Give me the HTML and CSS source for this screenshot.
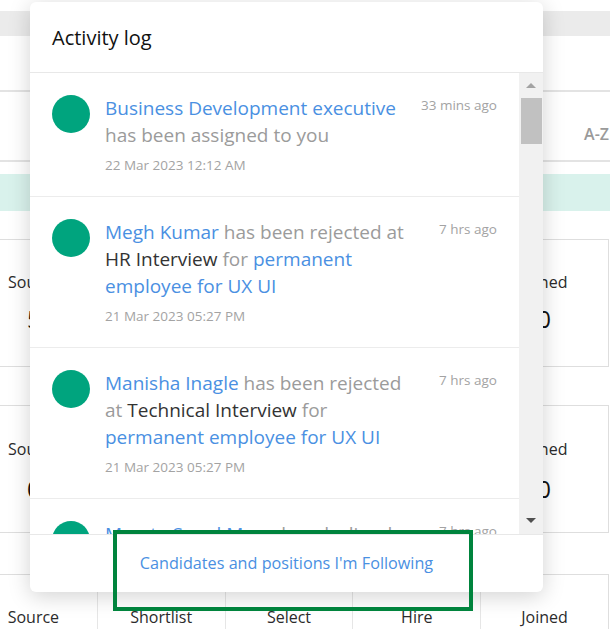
FILE: index.html
```html
<!DOCTYPE html>
<html lang="en">

<head>
    <meta charset="UTF-8">
    <meta name="viewport" content="width=device-width, initial-scale=1.0">
    <title>Activity log</title>
    <link rel="stylesheet" href="styles.css">
</head>

<body>

    <div class="page">
        <div class="top-strip"></div>
        <div class="toolbar"></div>
        <div class="sort-bar"><span class="sort">A-Z</span></div>
        <div class="notice"></div>

        <div class="stats stats-first">
            <div class="stat"><div class="stat-label">Source</div><div class="stat-value">5</div></div>
            <div class="stat"><div class="stat-label">Shortlist</div><div class="stat-value">2</div></div>
            <div class="stat"><div class="stat-label">Select</div><div class="stat-value">1</div></div>
            <div class="stat"><div class="stat-label">Hire</div><div class="stat-value">0</div></div>
            <div class="stat"><div class="stat-label">Joined</div><div class="stat-value">0</div></div>
        </div>

        <div class="stats stats-second">
            <div class="stat"><div class="stat-label">Source</div><div class="stat-value">0</div></div>
            <div class="stat"><div class="stat-label">Shortlist</div><div class="stat-value">0</div></div>
            <div class="stat"><div class="stat-label">Select</div><div class="stat-value">0</div></div>
            <div class="stat"><div class="stat-label">Hire</div><div class="stat-value">0</div></div>
            <div class="stat"><div class="stat-label">Joined</div><div class="stat-value">0</div></div>
        </div>

        <div class="stats stats-last">
            <div class="stat"><div class="stat-label">Source</div></div>
            <div class="stat"><div class="stat-label">Shortlist</div></div>
            <div class="stat"><div class="stat-label">Select</div></div>
            <div class="stat"><div class="stat-label">Hire</div></div>
            <div class="stat"><div class="stat-label">Joined</div></div>
        </div>
    </div>

    <div class="popup">
        <div class="popup-head">Activity log</div>

        <div class="log">
            <div class="log-items">

                <div class="entry">
                    <div class="avatar"></div>
                    <div class="entry-body">
                        <div class="entry-text"><span class="link">Business Development executive</span> has been assigned to you</div>
                        <div class="entry-date">22 Mar 2023 12:12 AM</div>
                    </div>
                    <div class="entry-time">33 mins ago</div>
                </div>

                <div class="entry">
                    <div class="avatar"></div>
                    <div class="entry-body">
                        <div class="entry-text"><span class="link">Megh Kumar</span> has been rejected at <span class="stage">HR Interview</span> for <span class="link">permanent employee for UX UI</span></div>
                        <div class="entry-date">21 Mar 2023 05:27 PM</div>
                    </div>
                    <div class="entry-time">7 hrs ago</div>
                </div>

                <div class="entry">
                    <div class="avatar"></div>
                    <div class="entry-body">
                        <div class="entry-text"><span class="link">Manisha Inagle</span> has been rejected at <span class="stage">Technical Interview</span> for <span class="link">permanent employee for UX UI</span></div>
                        <div class="entry-date">21 Mar 2023 05:27 PM</div>
                    </div>
                    <div class="entry-time">7 hrs ago</div>
                </div>

                <div class="entry">
                    <div class="avatar"></div>
                    <div class="entry-body">
                        <div class="entry-text"><span class="link">Mamta Sonal Mane</span> has declined the offer for <span class="link">permanent employee for UX UI</span></div>
                        <div class="entry-date">21 Mar 2023 05:27 PM</div>
                    </div>
                    <div class="entry-time">7 hrs ago</div>
                </div>

            </div>

            <div class="scrollbar">
                <div class="scroll-btn"><span class="arrow-up"></span></div>
                <div class="scroll-thumb"></div>
                <div class="scroll-track"></div>
                <div class="scroll-btn"><span class="arrow-down"></span></div>
            </div>
        </div>

        <div class="popup-foot">
            <a class="follow" href="#">Candidates and positions I'm Following</a>
        </div>
    </div>

    <div class="highlight"></div>

</body>

</html>
```

FILE: styles.css
```css
body {
    margin: 0;
    width: 610px;
    height: 629px;
    overflow: hidden;
    position: relative;
    font-family: "Open Sans", "Noto Sans", sans-serif;
    background-color: white;
}

.page {
    width: 610px;
    height: 629px;
    overflow: hidden;
}

.top-strip {
    margin-top: 11px;
    height: 25px;
    background-color: #ebebeb;
}

.toolbar {
    height: 54px;
    border-bottom: 2px solid #e3e3e3;
}

.sort-bar {
    height: 70px;
    padding-top: 30px;
    box-sizing: border-box;
    border-bottom: 2px solid #e3e3e3;
    display: flex;
    justify-content: flex-end;
}

.sort {
    font-size: 16px;
    line-height: 24px;
    font-weight: 600;
    color: #9a9a9a;
    margin-right: 1px;
}

.notice {
    margin-top: 12px;
    height: 37px;
    background-color: #d9f2ec;
}

.stats {
    display: flex;
    margin-left: -31px;
    width: 640px;
    height: 128px;
    box-sizing: border-box;
    border: 1px solid #dedede;
    margin-top: 38px;
}

.stats-first {
    margin-top: 28px;
}

.stats-last {
    margin-top: 41px;
}

.stat {
    width: 128px;
    padding-top: 30px;
    text-align: center;
}

.stats-second .stat {
    padding-top: 31px;
}

.stats-second .stat-value {
    margin-top: 12px;
}

.stats-last .stat {
    padding-top: 30px;
    border-left: 1px solid #e6e6e6;
}

.stats-last .stat:first-child {
    border-left: none;
}

.stat-label {
    font-size: 16px;
    line-height: 24px;
    color: #2b2b2b;
}

.stat-value {
    margin-top: 9px;
    font-size: 24px;
    line-height: 32px;
    color: #111;
}

/* popup */
.popup {
    position: absolute;
    left: 30px;
    top: 2px;
    width: 513px;
    height: 590px;
    background-color: white;
    border-radius: 6px;
    box-shadow: 0 4px 22px rgba(0, 0, 0, 0.18);
    display: flex;
    flex-direction: column;
    overflow: hidden;
}

.popup-head {
    height: 70px;
    flex-shrink: 0;
    padding: 0 22px;
    display: flex;
    align-items: center;
    border-bottom: 1px solid #e8e8e8;
    font-size: 20px;
    color: #111;
}

.log {
    display: flex;
    height: 461px;
    flex-shrink: 0;
}

.log-items {
    flex: 1;
    overflow: hidden;
}

.entry {
    display: flex;
    padding: 22px 22px 21px 22px;
    border-bottom: 1px solid #ececec;
}

.avatar {
    width: 38px;
    height: 38px;
    flex-shrink: 0;
    margin-right: 15px;
    border-radius: 50%;
    background-color: #00a47e;
}

.entry-body {
    width: 305px;
}

.entry-text {
    font-size: 19px;
    line-height: 27px;
    color: #9b9b9b;
}

.link {
    color: #4a90e2;
}

.stage {
    color: #333;
}

.entry-date {
    margin-top: 6px;
    font-size: 13.5px;
    line-height: 20px;
    color: #a3a3a3;
}

.entry-time {
    flex: 1;
    text-align: right;
    font-size: 13.5px;
    line-height: 20px;
    color: #a3a3a3;
    white-space: nowrap;
}

.scrollbar {
    width: 24px;
    background-color: #f1f1f1;
    display: flex;
    flex-direction: column;
}

.scroll-btn {
    height: 24px;
    display: flex;
    justify-content: center;
    align-items: center;
}

.arrow-up {
    border-left: 5px solid transparent;
    border-right: 5px solid transparent;
    border-bottom: 5px solid #a3a3a3;
}

.arrow-down {
    border-left: 5px solid transparent;
    border-right: 5px solid transparent;
    border-top: 5px solid #505050;
    margin-bottom: 4px;
}

.scroll-thumb {
    height: 46px;
    margin: 1px 1px 0 2px;
    background-color: #c1c1c1;
}

.scroll-track {
    flex: 1;
}

.popup-foot {
    flex: 1;
    border-top: 1px solid #e8e8e8;
    display: flex;
    justify-content: center;
    align-items: center;
    padding-bottom: 2px;
}

.follow {
    font-size: 16.2px;
    color: #4a90e2;
    text-decoration: none;
}

/* annotation box */
.highlight {
    position: absolute;
    left: 113px;
    top: 530px;
    width: 360px;
    height: 81px;
    box-sizing: border-box;
    border: 4px solid #00843d;
}
```
